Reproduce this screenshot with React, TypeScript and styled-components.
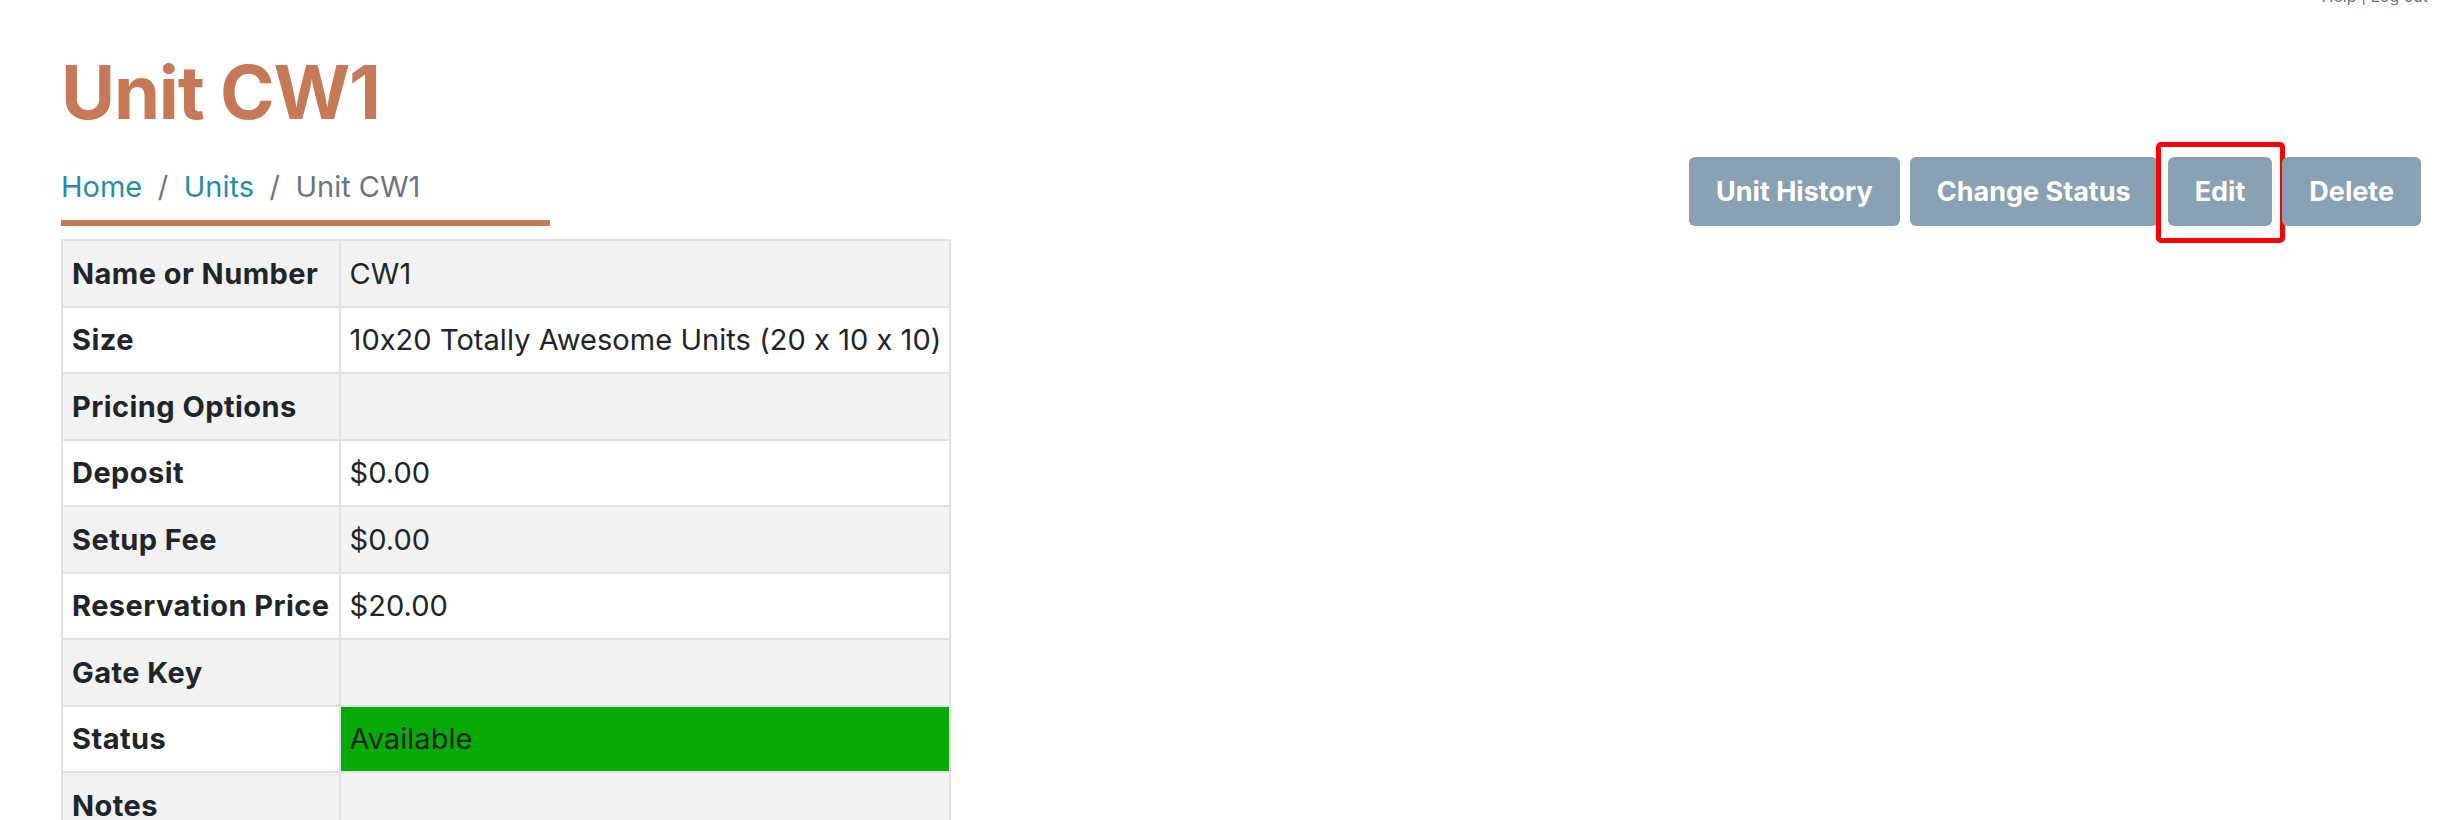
import React from "react";
import styled, { createGlobalStyle } from "styled-components";

const GlobalStyle = createGlobalStyle`
  html, body { margin: 0; padding: 0; background: #ffffff; }
  body {
    font-family: Inter, "Noto Sans", "Liberation Sans", sans-serif;
    font-feature-settings: "calt" 0;
    color: #212529;
  }
  * { box-sizing: border-box; }
`;

const Page = styled.div`
  padding: 0 25px 0 61px;
`;

const TopBar = styled.div`
  height: 5px;
  overflow: hidden;
  display: flex;
  justify-content: flex-end;
  padding-right: 18px;
  margin-right: -25px;
`;

const TopText = styled.span`
  font-size: 16px;
  line-height: 16px;
  margin-top: -12px;
  color: #6c757d;
  white-space: nowrap;
`;

const Header = styled.div`
  display: flex;
  justify-content: space-between;
  align-items: flex-end;
  margin-top: 41px;
`;

const TitleBlock = styled.div`
  display: flex;
  flex-direction: column;
`;

const Title = styled.h1`
  margin: 0;
  font-size: 74px;
  line-height: 92px;
  letter-spacing: -1.2px;
  font-weight: 700;
  color: #c77857;
`;

const Breadcrumb = styled.nav`
  margin-top: 24.5px;
  width: 489px;
  font-size: 29px;
  line-height: 48px;
  padding-bottom: 9.5px;
  border-bottom: 6px solid #c77857;
  display: flex;
`;

const Crumb = styled.a<{ $active?: boolean }>`
  color: ${(p) => (p.$active ? "#6c757d" : "#2a8ca2")};
  text-decoration: none;
`;

const Sep = styled.span`
  color: #6c757d;
  padding: 0 15.5px;
`;

const Actions = styled.div`
  display: flex;
  gap: 10px;
`;

const ButtonWrap = styled.div`
  position: relative;
  display: flex;
`;

const Button = styled.button`
  height: 69px;
  padding: 0 27px;
  border: none;
  border-radius: 6px;
  background: #8aa1b3;
  color: #ffffff;
  font-family: inherit;
  font-size: 27px;
  font-weight: 700;
  display: inline-flex;
  align-items: center;
  cursor: pointer;
`;

const Highlight = styled.span`
  position: absolute;
  top: -15px;
  left: -12px;
  right: -13px;
  bottom: -17px;
  border: 5px solid #ff0000;
  border-radius: 5px;
  pointer-events: none;
`;

const Table = styled.table`
  margin-top: 13px;
  border-collapse: collapse;
  border: 2px solid #dee2e6;
  font-size: 29px;
  line-height: 44px;
`;

const Row = styled.tr<{ $striped: boolean }>`
  background: ${(p) => (p.$striped ? "#f2f2f2" : "#ffffff")};
`;

const LabelCell = styled.th`
  text-align: left;
  font-weight: 700;
  letter-spacing: 0.45px;
  padding: 10.5px 9px 10px;
  border: 2px solid #dee2e6;
  white-space: nowrap;
`;

const ValueCell = styled.td<{ $status?: boolean }>`
  padding: 10.5px 8px 10px 9px;
  border: 2px solid #dee2e6;
  letter-spacing: 0.05px;
  white-space: nowrap;
  background: ${(p) => (p.$status ? "#05aa05" : "transparent")};
`;

const rows: { label: string; value: string; status?: boolean }[] = [
  { label: "Name or Number", value: "CW1" },
  { label: "Size", value: "10x20 Totally Awesome Units (20 x 10 x 10)" },
  { label: "Pricing Options", value: "" },
  { label: "Deposit", value: "$0.00" },
  { label: "Setup Fee", value: "$0.00" },
  { label: "Reservation Price", value: "$20.00" },
  { label: "Gate Key", value: "" },
  { label: "Status", value: "Available", status: true },
  { label: "Notes", value: "" },
];

export default function App() {
  return (
    <>
      <GlobalStyle />
      <Page>
        <TopBar>
          <TopText>Help | Log out</TopText>
        </TopBar>
        <Header>
          <TitleBlock>
            <Title>Unit CW1</Title>
            <Breadcrumb>
              <Crumb href="#">Home</Crumb>
              <Sep>/</Sep>
              <Crumb href="#">Units</Crumb>
              <Sep>/</Sep>
              <Crumb $active>Unit CW1</Crumb>
            </Breadcrumb>
          </TitleBlock>
          <Actions>
            <ButtonWrap>
              <Button>Unit History</Button>
            </ButtonWrap>
            <ButtonWrap>
              <Button>Change Status</Button>
            </ButtonWrap>
            <ButtonWrap>
              <Button>Edit</Button>
              <Highlight />
            </ButtonWrap>
            <ButtonWrap>
              <Button>Delete</Button>
            </ButtonWrap>
          </Actions>
        </Header>
        <Table>
          <tbody>
            {rows.map((r, i) => (
              <Row key={r.label} $striped={i % 2 === 0}>
                <LabelCell>{r.label}</LabelCell>
                <ValueCell $status={r.status}>{r.value}</ValueCell>
              </Row>
            ))}
          </tbody>
        </Table>
      </Page>
    </>
  );
}
